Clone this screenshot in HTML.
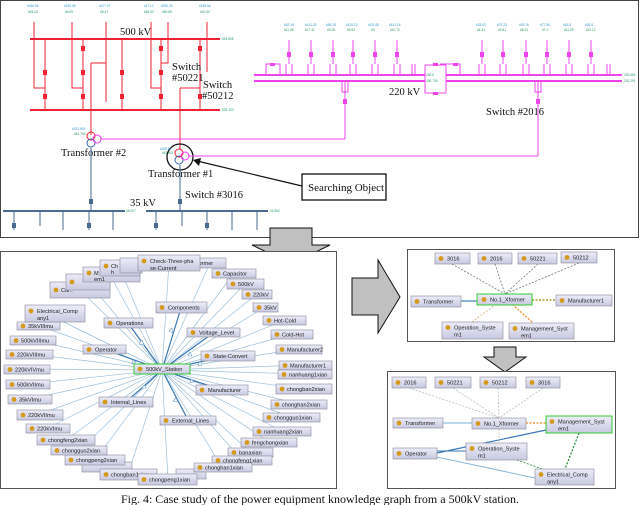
<!DOCTYPE html>
<html><head><meta charset="utf-8"><style>
html,body{margin:0;padding:0;background:#fff;}
svg{display:block;}
.n rect{fill:url(#g);stroke:#8a8a9a;stroke-width:.6}
.n text{font-family:"Liberation Sans",sans-serif;font-size:5.6px;fill:#222}
.s{font-family:"Liberation Serif",serif;font-size:10.5px;fill:#111}
.t{font-family:"Liberation Sans",sans-serif;font-size:3.2px}
</style></head><body>
<svg width="640" height="505" viewBox="0 0 640 505" xmlns="http://www.w3.org/2000/svg">
<defs>
<linearGradient id="g" x1="0" y1="0" x2="0" y2="1"><stop offset="0" stop-color="#ececf8"/><stop offset="1" stop-color="#c9c9e0"/></linearGradient>
<g id="dot"><circle r="2.4" fill="#d39a1c"/></g>
</defs>
<!-- top panel -->
<rect x="0.5" y="0.5" width="638" height="237" fill="#fff" stroke="#444" stroke-width="1"/>
<!-- 500kV red -->
<g stroke="#ee2233" stroke-width="1" fill="none">
<line x1="30" y1="39" x2="220" y2="39" stroke-width="2"/>
<line x1="30" y1="110" x2="220" y2="110" stroke-width="2"/>
<path d="M34 22V88H45M72 22V88H83M106 22V63H91M151 22V88H161M168 22V63H161M207 22V72"/>
<path d="M45 39V110M83 39V110M122 39V110M161 39V110M200 39V110M106 63V102"/>
<path d="M91 63V135M180 88V150M180 88H200"/>
</g>
<g fill="#ee2233"><rect x="43" y="70" width="4" height="5"/><rect x="43" y="94" width="4" height="5"/><rect x="81" y="46" width="4" height="5"/><rect x="81" y="70" width="4" height="5"/><rect x="81" y="94" width="4" height="5"/><rect x="120" y="70" width="4" height="5"/><rect x="120" y="94" width="4" height="5"/><rect x="159" y="46" width="4" height="5"/><rect x="159" y="70" width="4" height="5"/><rect x="159" y="94" width="4" height="5"/><rect x="198" y="46" width="4" height="5"/><rect x="198" y="94" width="4" height="5"/></g>
<g class="t" fill="#3399cc"><text x="27" y="7">#166.56</text><text x="64" y="7">#239.56</text><text x="99" y="7">#107.07</text><text x="144" y="7">#171.1</text><text x="161" y="7">#230.25</text><text x="199" y="7">#198.56</text></g>
<g class="t" fill="#229966"><text x="28" y="13">#43.23</text><text x="65" y="13">#6.09</text><text x="100" y="13">#6.47</text><text x="144" y="13">#62.93</text><text x="162" y="13">#60.89</text><text x="200" y="13">#10.90</text><text x="222" y="40">524.605</text><text x="222" y="111">525.100</text></g>
<text class="s" x="120" y="35">500 kV</text>
<text class="s" x="172" y="70">Switch</text><text class="s" x="172" y="81">#50221</text>
<text class="s" x="203" y="88">Switch</text><text class="s" x="202" y="99">#50212</text>
<!-- transformers -->
<g fill="none" stroke-width="1">
<circle cx="91" cy="136" r="4" stroke="#ee2233"/><circle cx="91" cy="143" r="4" stroke="#3366aa"/><circle cx="97" cy="139" r="4" stroke="#ee33ee"/>
<circle cx="179" cy="153" r="4" stroke="#ee2233"/><circle cx="179" cy="160" r="4" stroke="#3366aa"/><circle cx="185" cy="156" r="4" stroke="#ee33ee"/>
<circle cx="180" cy="157" r="13" stroke="#111" stroke-width="1.3"/>
</g>
<g class="t"><text x="72" y="130" fill="#3399cc">#331.691</text><text x="74" y="135" fill="#229966">#61.769</text><text x="160" y="150" fill="#3399cc">#329.84</text><text x="162" y="154" fill="#229966">#61.901</text></g>
<text class="s" x="61" y="156">Transformer #2</text>
<text class="s" x="148" y="177">Transformer #1</text>
<!-- magenta 220 -->
<g stroke="#ee44ee" fill="none" stroke-width="1">
<line x1="101" y1="139" x2="345" y2="139"/><path d="M345 139V82"/>
<line x1="189" y1="156" x2="538" y2="156"/><path d="M538 156V82"/>
<line x1="254" y1="75" x2="425" y2="75" stroke-width="2"/><line x1="254" y1="81" x2="425" y2="81" stroke-width="2"/>
<line x1="446" y1="75" x2="622" y2="75" stroke-width="2"/><line x1="446" y1="81" x2="622" y2="81" stroke-width="2"/>
<path d="M425 65H446M425 93H446M425 75V93M446 65V93M425 65V75M440 64H460V75"/>
<path d="M266 75V64H280V75M289 40V64M286 64V75M292 64V75M311 40V64M308 64V75M314 64V75"/>
<path d="M333 40V64M330 64V75M336 64V75M353 40V64M350 64V75M356 64V75M375 40V64M372 64V75M378 64V75M397 40V64M394 64V75M400 64V75M412 64V75M415 64V75"/>
<path d="M482 40V64M479 64V75M485 64V75M503 40V64M500 64V75M506 64V75M526 40V64M523 64V75M529 64V75M547 40V64M544 64V75M550 64V75M569 40V64M566 64V75M572 64V75M591 40V64M588 64V75M594 64V75M607 64V75M610 64V75"/>
<path d="M342 81V92H348V81M535 81V92H541V81"/>
</g>
<g fill="#ee44ee"><rect x="270" y="63" width="5" height="3"/><rect x="287" y="52" width="4" height="5"/><rect x="309" y="52" width="4" height="5"/><rect x="331" y="52" width="4" height="5"/><rect x="351" y="52" width="4" height="5"/><rect x="373" y="52" width="4" height="5"/><rect x="395" y="52" width="4" height="5"/><rect x="433" y="63" width="5" height="3"/><rect x="433" y="92" width="5" height="3"/><rect x="453" y="63" width="5" height="3"/><rect x="480" y="52" width="4" height="5"/><rect x="501" y="52" width="4" height="5"/><rect x="524" y="52" width="4" height="5"/><rect x="545" y="52" width="4" height="5"/><rect x="567" y="52" width="4" height="5"/><rect x="589" y="52" width="4" height="5"/><rect x="343" y="99" width="4" height="5"/><rect x="536" y="99" width="4" height="5"/></g>
<g class="t" fill="#3399cc"><text x="284" y="26">#92.16</text><text x="305" y="26">#141.33</text><text x="326" y="26">#95.25</text><text x="346" y="26">#120.12</text><text x="368" y="26">#111.65</text><text x="389" y="26">#141.16</text><text x="476" y="26">#33.03</text><text x="497" y="26">#75.23</text><text x="519" y="26">#33.76</text><text x="540" y="26">#77.56</text><text x="563" y="26">#16.8</text><text x="585" y="26">#26.8</text></g>
<g class="t" fill="#229966"><text x="284" y="31">#11.05</text><text x="305" y="31">#17.41</text><text x="327" y="31">#9.28</text><text x="347" y="31">#0.92</text><text x="371" y="31">#3</text><text x="390" y="31">#10.72</text><text x="477" y="31">#1.31</text><text x="498" y="31">#2.81</text><text x="520" y="31">#6.03</text><text x="542" y="31">#7.1</text><text x="564" y="31">#11.29</text><text x="586" y="31">#11.12</text><text x="624" y="76">230.664</text><text x="624" y="82">231.291</text><text x="426" y="76">230.6</text><text x="426" y="82">230.739</text></g>
<text class="s" x="389" y="95">220 kV</text>
<text class="s" x="486" y="115">Switch #2016</text>
<!-- searching object -->
<rect x="302" y="174" width="84" height="26" fill="#fff" stroke="#111" stroke-width="1.3"/>
<text class="s" x="308" y="191" style="font-size:11px">Searching Object</text>
<line x1="302" y1="186" x2="197" y2="161" stroke="#111" stroke-width="1.2"/>
<path d="M193 160L201 158L199 166Z" fill="#111"/>
<!-- 35kV -->
<g stroke="#4a6a90" fill="none">
<line x1="3" y1="211" x2="125" y2="211" stroke-width="2"/><line x1="146" y1="211" x2="268" y2="211" stroke-width="2"/>
<path d="M91 148V211M180 165V211M14 211V230M40 211V226M63 211V230M89 211V230M113 211V230M156 211V230M182 211V226M207 211V230M232 211V230M257 211V230"/>
</g>
<g fill="#4a6a90"><rect x="89" y="199" width="4" height="5"/><rect x="178" y="199" width="4" height="5"/><rect x="12" y="223" width="4" height="5"/><rect x="87" y="223" width="4" height="5"/><rect x="154" y="223" width="4" height="5"/><rect x="205" y="223" width="4" height="5"/></g>
<g class="t" fill="#229966"><text x="126" y="212">35.007</text><text x="270" y="212">34.962</text></g>
<text class="s" x="130" y="206">35 kV</text>
<text class="s" x="185" y="198">Switch #3016</text>
<!-- arrows -->
<path d="M270 228H312V245H330L291 264L252 245H270Z" fill="#c0c0c0" stroke="#111" stroke-width="1"/>
<path d="M352 278H378V260L400 297L378 333V315H352Z" fill="#c0c0c0" stroke="#111" stroke-width="1"/>
<path d="M494 347H516V357H526L505 372L484 357H494Z" fill="#c0c0c0" stroke="#111" stroke-width="1"/>
<!-- panels -->
<rect x="0.5" y="251.5" width="336" height="237" fill="#fff" stroke="#555"/>
<rect x="407.5" y="249.5" width="207" height="92" fill="#fff" stroke="#555"/>
<rect x="387.5" y="371.5" width="228" height="117" fill="#fff" stroke="#555"/>
<!-- big graph edges -->
<g stroke="#9cc0dc" stroke-width=".7" fill="none">
<path d="M162 370L45 313M162 370L40 326M162 370L33 340M162 370L30 354M162 370L27 369M162 370L28 384M162 370L30 399M162 370L40 414M162 370L48 428M162 370L66 440M162 370L80 450M162 370L95 460M162 370L128 474M162 370L168 479M162 370L222 467M162 370L242 460M162 370L250 452M162 370L269 442M162 370L282 431M162 370L291 417M162 370L299 404M162 370L304 389M162 370L305 374M162 370L305 365M162 370L299 349M162 370L292 334M162 370L285 320M162 370L265 307M162 370L257 294M162 370L245 284M162 370L234 273M162 370L210 263M162 370L169 263M162 370L120 268M162 370L110 275M162 370L88 282M162 370L80 290"/>
</g>
<g stroke="#3a78b5" stroke-width="1.2" fill="none">
<path d="M162 370L128 323M162 370L181 308M162 370L213 333M162 370L104 349M162 370L228 356M162 370L222 390M162 370L126 402M162 370L188 420"/>
</g>
<g fill="#fff" stroke="#6a9cc8" stroke-width=".6">
<path d="M142 340l-3 4 5 1zM172 328l-3 3 4 2zM190 352l-2 4 4 0zM133 360l-1 4 4-2zM200 361l2 4-4 1zM191 379l-1 4 4-1zM145 385l-4 3 5 0zM176 398l-3 3 5 1z"/>
</g>
<!-- big graph nodes -->
<g class="n">
<g transform="translate(50,282)"><rect width="60" height="16"/><use href="#dot" x="6" y="8"/><text x="11" y="10">Cur..</text></g>
<g transform="translate(66,274)"><rect width="44" height="16"/><use href="#dot" x="6" y="8"/></g>
<g transform="translate(83,267)"><rect width="57" height="15"/><use href="#dot" x="6" y="6"/><text x="11" y="8">M</text><text x="11" y="14">em1</text></g>
<g transform="translate(100,260)"><rect width="40" height="16"/><use href="#dot" x="6" y="6"/><text x="11" y="8">Ch</text><text x="11" y="14">h</text></g>
<g transform="translate(120,258)"><rect width="22" height="15"/></g>
<g transform="translate(194,258)"><rect width="32" height="10"/><text x="3" y="7">former</text></g>
<g transform="translate(212,269)"><rect width="44" height="9"/><use href="#dot" x="6" y="4.5"/><text x="11" y="6.5">Capacitor</text></g>
<g transform="translate(227,279)"><rect width="37" height="10"/><use href="#dot" x="6" y="5"/><text x="11" y="7">500kV</text></g>
<g transform="translate(242,290)"><rect width="30" height="9"/><use href="#dot" x="6" y="4.5"/><text x="11" y="6.5">220kV</text></g>
<g transform="translate(253,303)"><rect width="25" height="9"/><use href="#dot" x="6" y="4.5"/><text x="11" y="6.5">35kV</text></g>
<g transform="translate(263,316)"><rect width="43" height="9"/><use href="#dot" x="6" y="4.5"/><text x="11" y="6.5">Hot-Cold</text></g>
<g transform="translate(271,330)"><rect width="42" height="9"/><use href="#dot" x="6" y="4.5"/><text x="11" y="6.5">Cold-Hot</text></g>
<g transform="translate(276,345)"><rect width="46" height="9"/><use href="#dot" x="6" y="4.5"/><text x="11" y="6.5">Manufacturer2</text></g>
<g transform="translate(279,361)"><rect width="53" height="9"/><use href="#dot" x="6" y="4.5"/><text x="11" y="6.5">Manufacturer1</text></g>
<g transform="translate(278,370)"><rect width="54" height="9"/><use href="#dot" x="6" y="4.5"/><text x="11" y="6.5">nanhuang1xian</text></g>
<g transform="translate(276,384)"><rect width="56" height="10"/><use href="#dot" x="6" y="5"/><text x="11" y="7">chongban2xian</text></g>
<g transform="translate(271,400)"><rect width="56" height="9"/><use href="#dot" x="6" y="4.5"/><text x="11" y="6.5">chonghan2xian</text></g>
<g transform="translate(263,413)"><rect width="57" height="9"/><use href="#dot" x="6" y="4.5"/><text x="11" y="6.5">chongguo1xian</text></g>
<g transform="translate(253,427)"><rect width="58" height="9"/><use href="#dot" x="6" y="4.5"/><text x="11" y="6.5">nanhuang2xian</text></g>
<g transform="translate(241,438)"><rect width="56" height="9"/><use href="#dot" x="6" y="4.5"/><text x="11" y="6.5">fengchongxian</text></g>
<g transform="translate(228,448)"><rect width="45" height="9"/><use href="#dot" x="6" y="4.5"/><text x="11" y="6.5">banaxian</text></g>
<g transform="translate(212,456)"><rect width="60" height="9"/><use href="#dot" x="6" y="4.5"/><text x="11" y="6.5">chongfeng1xian</text></g>
<g transform="translate(176,469)"><rect width="30" height="10"/></g>
<g transform="translate(194,463)"><rect width="58" height="9"/><use href="#dot" x="6" y="4.5"/><text x="11" y="6.5">chonghan1xian</text></g>
<g transform="translate(82,462)"><rect width="50" height="10"/></g>
<g transform="translate(100,469)"><rect width="57" height="11"/><use href="#dot" x="6" y="5.5"/><text x="11" y="7.5">chongban1xian</text></g>
<g transform="translate(138,474)"><rect width="59" height="11"/><use href="#dot" x="6" y="5.5"/><text x="11" y="7.5">chongpeng1xian</text></g>
<g transform="translate(65,455)"><rect width="60" height="10"/><use href="#dot" x="6" y="5"/><text x="11" y="7">chongpeng2xian</text></g>
<g transform="translate(51,446)"><rect width="56" height="9"/><use href="#dot" x="6" y="4.5"/><text x="11" y="6.5">chongguo2xian</text></g>
<g transform="translate(37,435)"><rect width="58" height="10"/><use href="#dot" x="6" y="5"/><text x="11" y="7">chongfeng2xian</text></g>
<g transform="translate(26,424)"><rect width="44" height="9"/><use href="#dot" x="6" y="4.5"/><text x="11" y="6.5">220kVImu</text></g>
<g transform="translate(17,410)"><rect width="46" height="10"/><use href="#dot" x="6" y="5"/><text x="11" y="7">220kVIImu</text></g>
<g transform="translate(8,395)"><rect width="44" height="9"/><use href="#dot" x="6" y="4.5"/><text x="11" y="6.5">35kVImu</text></g>
<g transform="translate(6,380)"><rect width="44" height="9"/><use href="#dot" x="6" y="4.5"/><text x="11" y="6.5">500kVIImu</text></g>
<g transform="translate(4,365)"><rect width="46" height="9"/><use href="#dot" x="6" y="4.5"/><text x="11" y="6.5">220kVIVmu</text></g>
<g transform="translate(6,350)"><rect width="47" height="9"/><use href="#dot" x="6" y="4.5"/><text x="11" y="6.5">220kVIIImu</text></g>
<g transform="translate(10,336)"><rect width="46" height="9"/><use href="#dot" x="6" y="4.5"/><text x="11" y="6.5">500kVIIImu</text></g>
<g transform="translate(17,322)"><rect width="43" height="8"/><use href="#dot" x="6" y="4"/><text x="11" y="6">35kVIIImu</text></g>
<g transform="translate(25,305)"><rect width="60" height="17"/><use href="#dot" x="6" y="6"/><text x="12" y="8">Electrical_Comp</text><text x="12" y="15">any1</text></g>
<g transform="translate(138,255)"><rect width="62" height="16"/><use href="#dot" x="6" y="6"/><text x="12" y="8">Check-Three-pha</text><text x="12" y="15">se-Current</text></g>
<g transform="translate(104,318)"><rect width="49" height="10"/><use href="#dot" x="6" y="5"/><text x="12" y="7">Operations</text></g>
<g transform="translate(156,302)"><rect width="51" height="11"/><use href="#dot" x="6" y="5.5"/><text x="12" y="7.5">Components</text></g>
<g transform="translate(187,328)"><rect width="53" height="9"/><use href="#dot" x="6" y="4.5"/><text x="12" y="6.5">Voltage_Level</text></g>
<g transform="translate(83,345)"><rect width="43" height="9"/><use href="#dot" x="6" y="4.5"/><text x="12" y="6.5">Operator</text></g>
<g transform="translate(201,351)"><rect width="54" height="10"/><use href="#dot" x="6" y="5"/><text x="12" y="7">State-Convert</text></g>
<g transform="translate(196,385)"><rect width="52" height="10"/><use href="#dot" x="6" y="5"/><text x="12" y="7">Manufacturer</text></g>
<g transform="translate(99,397)"><rect width="54" height="10"/><use href="#dot" x="6" y="5"/><text x="12" y="7">Internal_Lines</text></g>
<g transform="translate(160,416)"><rect width="56" height="9"/><use href="#dot" x="6" y="4.5"/><text x="12" y="6.5">External_Lines</text></g>
<g transform="translate(134,364)"><rect width="56" height="10" style="stroke:#3c3;stroke-width:1"/><use href="#dot" x="6" y="5"/><text x="12" y="7">500kV_Station</text></g>
</g>
<!-- top right graph -->
<g stroke-width=".8" fill="none" stroke-dasharray="2,1.5">
<path d="M452 264L505 294M495 264L505 294M538 264L505 294M579 263L505 294" stroke="#777"/>
<path d="M532 300H556" stroke="#998800" stroke-width="1.2"/>
<path d="M472 322L495 305" stroke="#d8b070"/>
<path d="M532 322L513 305" stroke="#ee8822" stroke-width="1.2"/>
</g>
<path d="M461 301H477" stroke="#4a8ac0" stroke-width="1.3"/>
<g class="n">
<g transform="translate(435,253)"><rect width="35" height="11"/><use href="#dot" x="6" y="5.5"/><text x="12" y="7.5">3016</text></g>
<g transform="translate(478,253)"><rect width="34" height="11"/><use href="#dot" x="6" y="5.5"/><text x="12" y="7.5">2016</text></g>
<g transform="translate(518,253)"><rect width="39" height="11"/><use href="#dot" x="6" y="5.5"/><text x="12" y="7.5">50221</text></g>
<g transform="translate(561,252)"><rect width="36" height="11"/><use href="#dot" x="6" y="5.5"/><text x="12" y="7.5">50212</text></g>
<g transform="translate(411,296)"><rect width="50" height="11"/><use href="#dot" x="6" y="5.5"/><text x="12" y="7.5">Transformer</text></g>
<g transform="translate(556,295)"><rect width="56" height="11"/><use href="#dot" x="6" y="5.5"/><text x="12" y="7.5">Manufacturer1</text></g>
<g transform="translate(442,322)"><rect width="61" height="17"/><use href="#dot" x="6" y="5.5"/><text x="12" y="7.5">Operation_Syste</text><text x="12" y="14.5">m1</text></g>
<g transform="translate(509,323)"><rect width="65" height="16"/><use href="#dot" x="6" y="5.5"/><text x="12" y="7.5">Management_Syst</text><text x="12" y="14.5">em1</text></g>
<g transform="translate(477,294)"><rect width="55" height="11" style="stroke:#3c3;stroke-width:1"/><use href="#dot" x="7" y="5.5"/><text x="13" y="7.5">No.1_Xformer</text></g>
</g>
<!-- bottom right graph -->
<g stroke-width=".8" fill="none" stroke-dasharray="2,1.5">
<path d="M409 388L499 418M453 388L499 418M498 388L499 418M543 388L499 418" stroke="#bbb"/>
<path d="M499 429V443" stroke="#d8c090"/>
<path d="M526 423H546" stroke="#ee8822" stroke-width="1.3"/>
<path d="M579 433L565 469" stroke="#228833" stroke-width="1.2"/>
<path d="M517 460L545 470" stroke="#228833"/>
</g>
<g stroke-width="1" fill="none">
<path d="M443 423H472" stroke="#7ab0d8"/>
<path d="M437 453L546 430" stroke="#3a78b5" stroke-width="1.2"/>
<path d="M437 451H466" stroke="#3a78b5"/>
<path d="M437 457L535 478" stroke="#8fb8d8"/>
</g>
<g class="n">
<g transform="translate(392,377)"><rect width="34" height="11"/><use href="#dot" x="6" y="5.5"/><text x="12" y="7.5">2016</text></g>
<g transform="translate(435,377)"><rect width="36" height="11"/><use href="#dot" x="6" y="5.5"/><text x="12" y="7.5">50221</text></g>
<g transform="translate(480,377)"><rect width="36" height="11"/><use href="#dot" x="6" y="5.5"/><text x="12" y="7.5">50212</text></g>
<g transform="translate(526,377)"><rect width="34" height="11"/><use href="#dot" x="6" y="5.5"/><text x="12" y="7.5">3016</text></g>
<g transform="translate(393,418)"><rect width="50" height="10"/><use href="#dot" x="6" y="5"/><text x="12" y="7">Transformer</text></g>
<g transform="translate(472,418)"><rect width="54" height="11"/><use href="#dot" x="6" y="5.5"/><text x="12" y="7.5">No.1_Xformer</text></g>
<g transform="translate(393,448)"><rect width="44" height="11"/><use href="#dot" x="6" y="5.5"/><text x="12" y="7.5">Operator</text></g>
<g transform="translate(466,443)"><rect width="61" height="17"/><use href="#dot" x="6" y="5.5"/><text x="12" y="7.5">Operation_Syste</text><text x="12" y="14.5">m1</text></g>
<g transform="translate(535,469)"><rect width="59" height="16"/><use href="#dot" x="6" y="5.5"/><text x="12" y="7.5">Electrical_Comp</text><text x="12" y="14.5">any1</text></g>
<g transform="translate(546,416)"><rect width="66" height="17" style="stroke:#3c3;stroke-width:1"/><use href="#dot" x="6" y="5.5"/><text x="12" y="7.5">Management_Syst</text><text x="12" y="14.5">em1</text></g>
</g>
<text x="320" y="503" text-anchor="middle" style="font-family:'Liberation Serif',serif;font-size:12px;fill:#111">Fig. 4: Case study of the power equipment knowledge graph from a 500kV station.</text>
</svg>
</body></html>
